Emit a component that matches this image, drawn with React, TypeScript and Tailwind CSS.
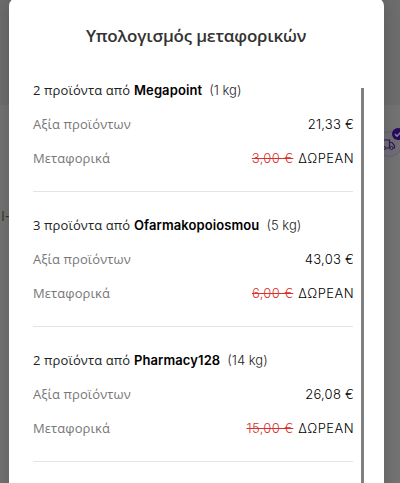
import React from "react";

type Shipment = {
  count: number;
  shop: string;
  weight: string;
  value: string;
  shipping: string;
};

const shipments: Shipment[] = [
  { count: 2, shop: "Megapoint", weight: "1 kg", value: "21,33 €", shipping: "3,00 €" },
  { count: 3, shop: "Ofarmakopoiosmou", weight: "5 kg", value: "43,03 €", shipping: "6,00 €" },
  { count: 2, shop: "Pharmacy128", weight: "14 kg", value: "26,08 €", shipping: "15,00 €" },
];

function DeliveryBadge() {
  return (
    <svg className="absolute left-[375px] top-[125px]" width="32" height="36" viewBox="0 0 32 36" fill="none">
      <circle cx="14" cy="19" r="12.5" fill="#727076" stroke="#69657a" strokeWidth="1.5" />
      <path d="M5 15h9.5v8H5zM14.5 17.5h2.5l2.5 3V23h-5" stroke="#2c1a55" strokeWidth="1.2" />
      <circle cx="9" cy="23" r="1.6" fill="#737078" stroke="#2c1a55" />
      <circle cx="16.5" cy="23" r="1.6" fill="#737078" stroke="#2c1a55" />
      <circle cx="23" cy="9" r="6" fill="#260c5c" />
      <path d="M20 9l2 2.2 4-4.2" stroke="#8d879b" strokeWidth="1.4" />
    </svg>
  );
}

function ShipmentGroup({ item }: { item: Shipment }) {
  return (
    <section className="mb-4 w-[320px] border-b border-[#e4e4e4] pb-4">
      <div className="flex h-[34px] items-baseline whitespace-pre pt-2 text-black">
        <span className="w-[101px] text-[13px] font-normal tracking-[0.1px] text-[#222222]">{item.count} προϊόντα από </span>
        <b className="font-['Inter',sans-serif] text-[13px] font-semibold tracking-[0.1px]">{item.shop}</b>
        <span className="ml-[7px] font-['Inter',sans-serif] text-[13px] text-[#222222]">({item.weight})</span>
      </div>
      <div className="flex h-[34px] items-center justify-between">
        <span className="pt-[2px] text-[13px] font-normal tracking-[0.08px] text-[#777777]">Αξία προϊόντων</span>
        <span className="-mr-px pt-[2px] font-['Inter',sans-serif] text-[13px] tracking-[0.25px] text-black">{item.value}</span>
      </div>
      <div className="flex h-[34px] items-center justify-between">
        <span className="pt-[2px] text-[13px] font-normal tracking-[0.08px] text-[#777777]">Μεταφορικά</span>
        <span className="-mr-px flex gap-[5px] pt-[2px] font-['Inter',sans-serif] text-[13px] text-black">
          <s className="tracking-[0.35px] text-[#d8302b]">{item.shipping}</s>
          <span className="tracking-[0.45px]">ΔΩΡΕΑΝ</span>
        </span>
      </div>
    </section>
  );
}

export default function App() {
  return (
    <div className="relative h-[483px] w-[400px] overflow-hidden bg-[#747474] font-['Open_Sans','Noto_Sans',sans-serif] text-[14px] font-light">
      <div className="h-[105px] bg-[#6e6e6e]" />
      <span className="absolute left-[1px] top-[205px] text-[14px] font-normal text-[#3c3526]">Ι-</span>
      <DeliveryBadge />
      <main className="absolute left-[9px] top-[-2px] h-[500px] w-[375px] rounded-t-[8px] bg-white px-6 shadow-[0_0_20px_rgba(0,0,0,0.2)]">
        <h1 className="-ml-px flex h-[75px] items-center justify-center text-[17px] font-semibold tracking-[-0.2px] text-[#333333]">
          Υπολογισμός μεταφορικών
        </h1>
        {shipments.map((item) => (
          <ShipmentGroup key={item.shop} item={item} />
        ))}
        <div className="absolute right-[20px] top-[90px] h-[410px] w-[3px] bg-[#808080]" />
      </main>
    </div>
  );
}
